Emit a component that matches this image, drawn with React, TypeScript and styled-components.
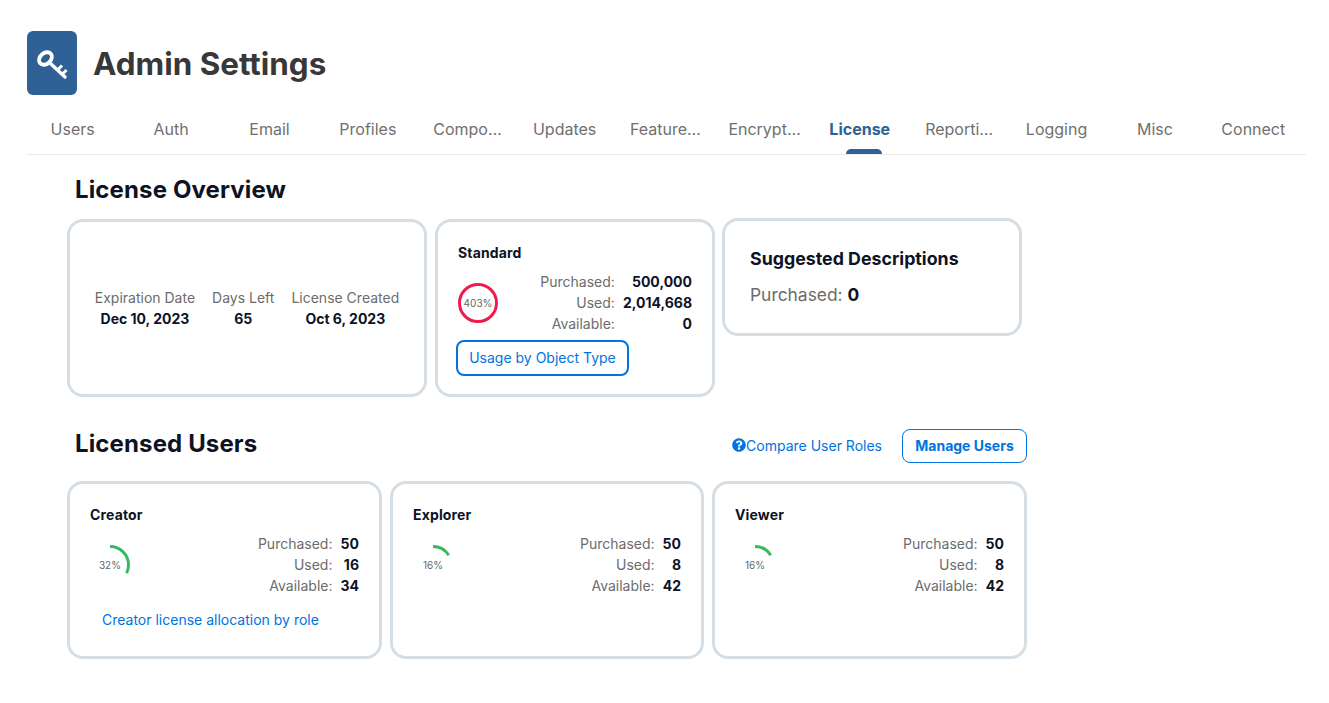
import React from "react";
import styled, { createGlobalStyle } from "styled-components";
import { FaQuestionCircle } from "react-icons/fa";

const Global = createGlobalStyle`
  html, body { margin: 0; padding: 0; background: #fff; }
  body { font-family: Inter, "Liberation Sans", sans-serif; color: #0e1324; }
`;

const Page = styled.div`
  width: 1329px;
  height: 703px;
  overflow: hidden;
  box-sizing: border-box;
  padding: 31px 23px 0 27px;
`;
const Header = styled.header`
  display: flex;
  align-items: center;
  gap: 16px;
`;
const IconTile = styled.div`
  width: 50px;
  height: 64px;
  border-radius: 6px;
  background: #2f6096;
  display: flex;
  align-items: center;
  justify-content: center;
`;
const Title = styled.h1`
  margin: 2px 0 0;
  font-size: 31.4px;
  font-weight: 700;
  color: #383838;
`;
const Tabs = styled.nav`
  display: grid;
  grid-template-columns: repeat(13, 1fr);
  height: 59px;
  border-bottom: 1px solid #ebebeb;
  box-sizing: content-box;
`;
const Tab = styled.div<{ $active?: boolean; $long?: boolean }>`
  position: relative;
  display: flex;
  justify-content: center;
  box-sizing: border-box;
  padding: 24px ${(p) => (p.$long ? 0 : 7)}px 0 0;
  font-size: 16px;
  line-height: 20px;
  font-weight: ${(p) => (p.$active ? 700 : 400)};
  color: ${(p) => (p.$active ? "#2f6096" : "#707070")};
  ${(p) =>
    p.$active &&
    `&::after {
      content: "";
      position: absolute;
      left: 50%;
      bottom: 0;
      width: 36px;
      height: 5px;
      margin-left: -17px;
      background: #2f6096;
      border-radius: 5px 5px 0 0;
    }`}
`;
const TabLabel = styled.span`
  max-width: 73px;
  white-space: nowrap;
  overflow: hidden;
  text-overflow: ellipsis;
`;
const Main = styled.main`
  padding-left: 40px;
  width: 960px;
`;
const SectionHead = styled.div<{ $top: number; $h: number }>`
  display: flex;
  align-items: center;
  margin-top: ${(p) => p.$top}px;
  height: ${(p) => p.$h}px;
  padding-left: 8px;
`;
const Heading = styled.h2<{ $raise?: number }>`
  margin: 0 0 ${(p) => p.$raise ?? 0}px;
  font-size: 24px;
  letter-spacing: 0.13px;
  font-weight: 700;
  color: #0e1324;
  flex: 1;
`;
const CardRow = styled.div<{ $top: number }>`
  display: flex;
  align-items: flex-start;
  gap: 8px;
  margin-top: ${(p) => p.$top}px;
`;
const Card = styled.section<{ $w: number; $h: number }>`
  box-sizing: border-box;
  width: ${(p) => p.$w}px;
  height: ${(p) => p.$h}px;
  border: 3px solid #d5dee4;
  border-radius: 16px;
  background: #fff;
`;
const DatesCard = styled(Card)`
  display: flex;
  align-items: center;
  justify-content: center;
  gap: 17px;
`;
const DateCol = styled.div`
  text-align: center;
  font-size: 14px;
  line-height: 21px;
  color: #6c6c6c;
  & > b {
    display: block;
    color: #0e1324;
    font-weight: 700;
  }
`;
const UsageCard = styled(Card)`
  padding: 21px 20px 0 20px;
`;
const CardTitle = styled.h3`
  margin: 0;
  font-size: 14px;
  letter-spacing: 0.15px;
  line-height: 20px;
  font-weight: 700;
  color: #0e1324;
`;
const UsageBody = styled.div`
  display: flex;
  justify-content: space-between;
  align-items: center;
  margin-top: 8px;
`;
const GaugeBox = styled.div`
  position: relative;
  width: 40px;
  height: 40px;
  display: flex;
  align-items: center;
  justify-content: center;
  font-size: 10px;
  color: #666;
  & > svg {
    position: absolute;
    inset: 0;
  }
`;
const Stats = styled.dl`
  display: grid;
  grid-template-columns: auto auto;
  column-gap: 8px;
  margin: 0;
  font-size: 14px;
  line-height: 21px;
  text-align: right;
  & > dt {
    color: #6c6c6c;
  }
  & > dd {
    margin: 0;
    font-weight: 700;
    color: #0e1324;
  }
`;
const OutlineButton = styled.button`
  display: block;
  box-sizing: border-box;
  width: 173px;
  height: 36px;
  margin: 6px 0 0 -2px;
  border: 2px solid #0073e0;
  border-radius: 8px;
  background: #fff;
  color: #0073e0;
  font: 400 14px Inter, sans-serif;
  padding: 0 0 1px;
`;
const SuggestTitle = styled.h3`
  margin: 0;
  font-size: 17.8px;
  line-height: 24px;
  font-weight: 700;
  color: #0e1324;
`;
const SuggestCard = styled(Card)`
  margin: -1px 0 0 -1px;
  padding: 26px 25px 0;
`;
const SuggestLine = styled.p`
  margin: 12px 0 0;
  font-size: 17.4px;
  line-height: 24px;
  color: #6c6c6c;
  & > b {
    color: #0e1324;
    font-weight: 700;
  }
`;
const CompareLink = styled.a`
  display: flex;
  align-items: center;
  font-size: 14px;
  color: #0073e0;
  margin: 0 20px 2px 0;
`;
const ManageButton = styled.button`
  box-sizing: border-box;
  width: 125px;
  height: 34px;
  border: 1px solid #0073e0;
  border-radius: 8px;
  background: #fff;
  color: #0073e0;
  font: 700 14px Inter, sans-serif;
  padding: 0 0 2px;
`;
const UsageLink = styled.a`
  display: block;
  margin: 14px 0 0 12px;
  font-size: 14px;
  line-height: 20px;
  color: #0073e0;
`;

const R = 18.5;
const C = 2 * Math.PI * R;

function Gauge({ pct, color }: { pct: number; color: string }) {
  const fill = Math.min(pct, 100) / 100;
  return (
    <GaugeBox>
      <svg width="40" height="40" viewBox="0 0 40 40">
        <circle
          cx="20"
          cy="20"
          r={R}
          fill="none"
          stroke={color}
          strokeWidth="3"
          strokeDasharray={`${C * fill} ${C}`}
          transform="rotate(-90 20 20)"
        />
      </svg>
      {pct}%
    </GaugeBox>
  );
}

function StatList({ rows }: { rows: [string, string][] }) {
  return (
    <Stats>
      {rows.flatMap(([k, v]) => [<dt key={k}>{k}:</dt>, <dd key={k + "v"}>{v}</dd>])}
    </Stats>
  );
}

const KeyIcon = () => (
  <svg width="50" height="64" viewBox="0 0 50 64" fill="none" stroke="#fff" strokeLinecap="round">
    <ellipse cx="18.5" cy="27.5" rx="7.2" ry="5.4" strokeWidth="3.8" transform="rotate(-42 18.5 27.5)" />
    <path d="M24 33 L38 46" strokeWidth="3.4" />
    <path d="M30.5 39 L35 34.5 M35 43.5 L39.5 39" strokeWidth="3" strokeLinecap="butt" />
  </svg>
);

const tabs = [
  "Users", "Auth", "Email", "Profiles", "Components", "Updates", "Feature Flags",
  "Encryption", "License", "Reporting", "Logging", "Misc", "Connect",
];

export default function App() {
  return (
    <Page>
      <Global />
      <Header>
        <IconTile>
          <KeyIcon />
        </IconTile>
        <Title>Admin Settings</Title>
      </Header>
      <Tabs>
        {tabs.map((t) => (
          <Tab key={t} $active={t === "License"} $long={t.length > 8}>
            <TabLabel>{t}</TabLabel>
          </Tab>
        ))}
      </Tabs>
      <Main>
        <SectionHead $top={15} $h={38}>
          <Heading>License Overview</Heading>
        </SectionHead>
        <CardRow $top={11}>
          <DatesCard $w={360} $h={178}>
            <DateCol>Expiration Date<b>Dec 10, 2023</b></DateCol>
            <DateCol>Days Left<b>65</b></DateCol>
            <DateCol>License Created<b>Oct 6, 2023</b></DateCol>
          </DatesCard>
          <UsageCard $w={280} $h={178}>
            <CardTitle>Standard</CardTitle>
            <UsageBody>
              <Gauge pct={403} color="#ee1c4e" />
              <StatList rows={[["Purchased", "500,000"], ["Used", "2,014,668"], ["Available", "0"]]} />
            </UsageBody>
            <OutlineButton>Usage by Object Type</OutlineButton>
          </UsageCard>
          <SuggestCard $w={300} $h={118}>
            <SuggestTitle>Suggested Descriptions</SuggestTitle>
            <SuggestLine>Purchased: <b>0</b></SuggestLine>
          </SuggestCard>
        </CardRow>
        <SectionHead $top={32} $h={34}>
          <Heading $raise={6}>Licensed Users</Heading>
          <CompareLink><FaQuestionCircle size={14} />Compare User Roles</CompareLink>
          <ManageButton>Manage Users</ManageButton>
        </SectionHead>
        <CardRow $top={18}>
          <UsageCard $w={315} $h={178}>
            <CardTitle>Creator</CardTitle>
            <UsageBody>
              <Gauge pct={32} color="#3bb85d" />
              <StatList rows={[["Purchased", "50"], ["Used", "16"], ["Available", "34"]]} />
            </UsageBody>
            <UsageLink>Creator license allocation by role</UsageLink>
          </UsageCard>
          <UsageCard $w={314} $h={178}>
            <CardTitle>Explorer</CardTitle>
            <UsageBody>
              <Gauge pct={16} color="#3bb85d" />
              <StatList rows={[["Purchased", "50"], ["Used", "8"], ["Available", "42"]]} />
            </UsageBody>
          </UsageCard>
          <UsageCard $w={315} $h={178}>
            <CardTitle>Viewer</CardTitle>
            <UsageBody>
              <Gauge pct={16} color="#3bb85d" />
              <StatList rows={[["Purchased", "50"], ["Used", "8"], ["Available", "42"]]} />
            </UsageBody>
          </UsageCard>
        </CardRow>
      </Main>
    </Page>
  );
}
